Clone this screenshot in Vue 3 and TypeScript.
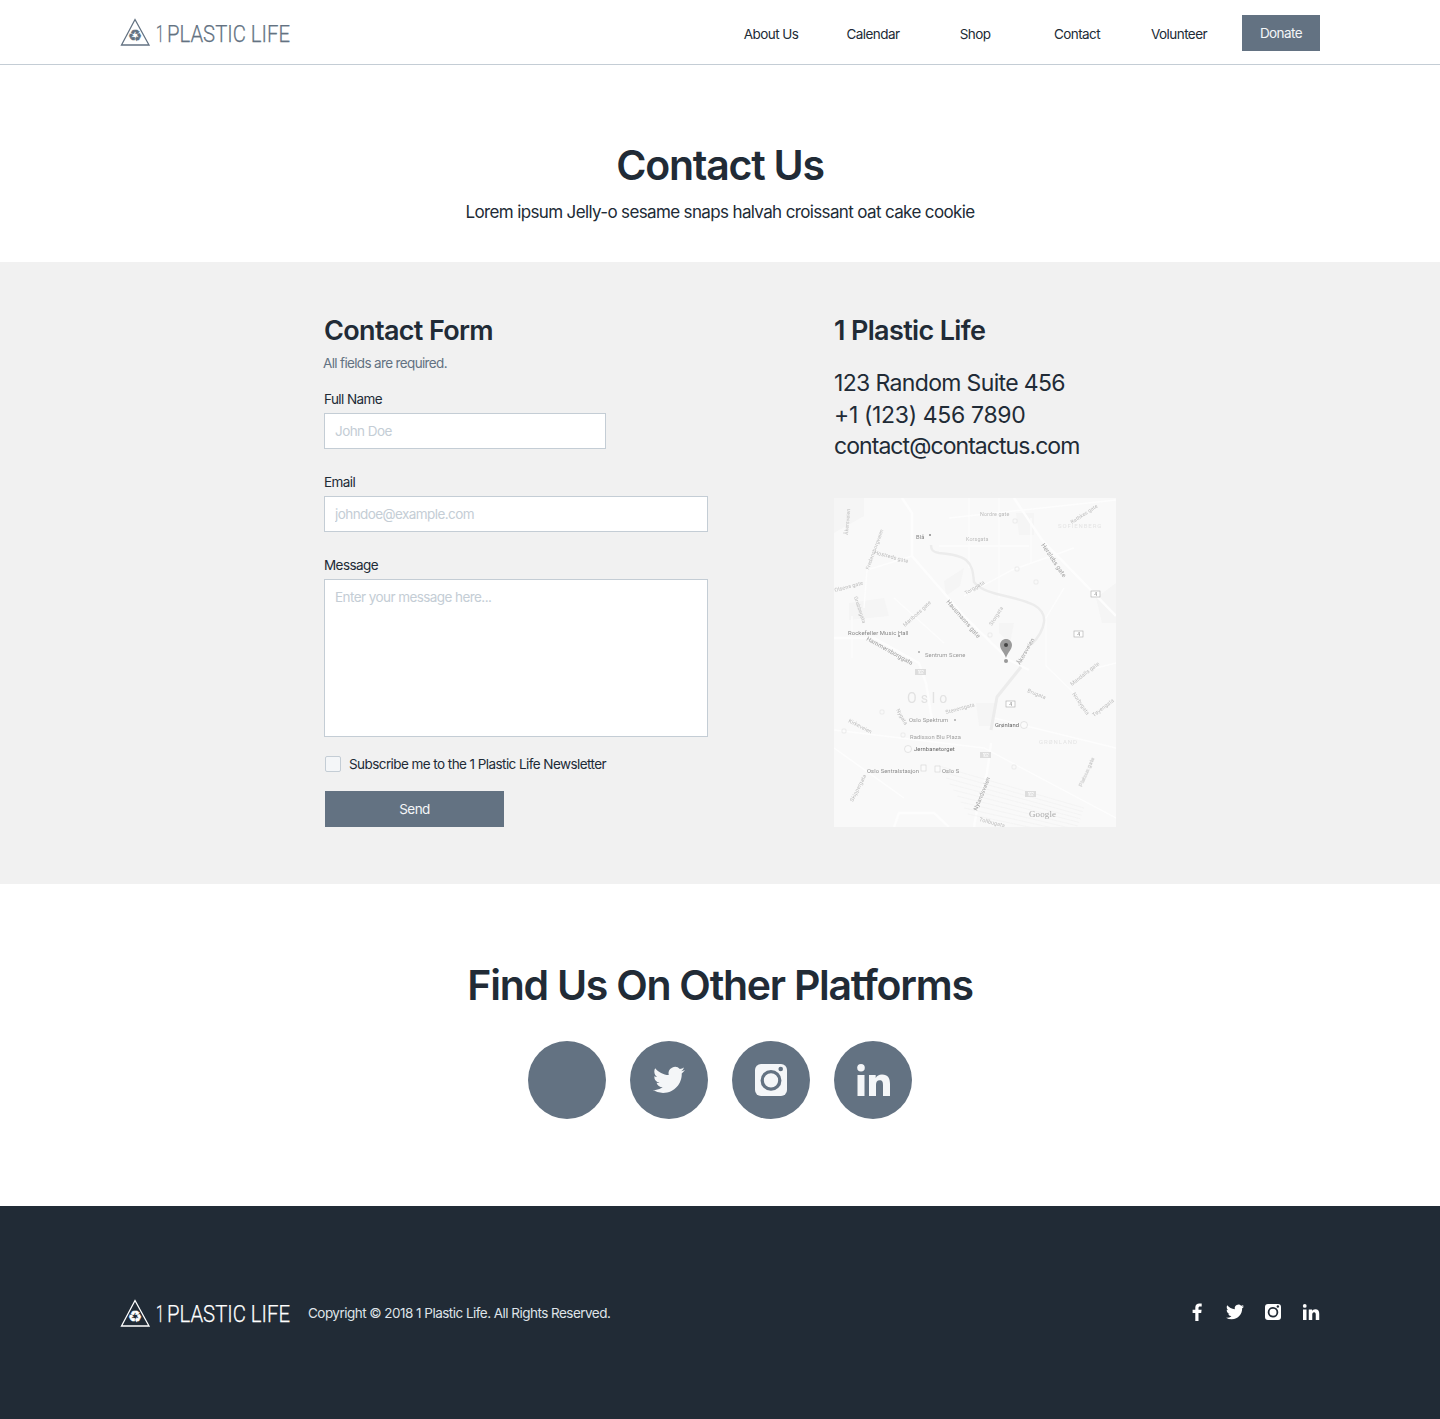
<script setup lang="ts">
const nav: string[] = ['About Us', 'Calendar', 'Shop', 'Contact', 'Volunteer']

interface Label { t: string; x: number; y: number; r?: number; c?: string; s?: number }
const labels: Label[] = [
  { t: 'Nordre gate', x: 146, y: 18, s: 5.4 },
  { t: 'Korsgata', x: 132, y: 43, s: 5.4 },
  { t: 'Blå', x: 82, y: 41, c: '#868686', s: 5.8 },
  { t: 'Rathkes gate', x: 238, y: 26, r: -33, s: 5.2 },
  { t: 'Hausmanns gate', x: 112, y: 104, r: 49, c: '#a0a0a0', s: 6.2 },
  { t: 'Herslebs gate', x: 207, y: 47, r: 56, c: '#a0a0a0', s: 6.2 },
  { t: 'Rockefeller Music Hall', x: 14, y: 137, c: '#868686', s: 5.9 },
  { t: 'Hammersborggata', x: 32, y: 142, r: 29, c: '#989898', s: 6 },
  { t: 'Sentrum Scene', x: 91, y: 159, c: '#989898', s: 5.8 },
  { t: 'Åkersveien', x: 186, y: 167, r: -60, c: '#a0a0a0', s: 5.8 },
  { t: 'Hostreds gate', x: 40, y: 56, r: 15, s: 5.4 },
  { t: 'Fredensborgveien', x: 35, y: 72, r: -70, s: 5.2 },
  { t: 'Torggata', x: 132, y: 97, r: -31, s: 5.4 },
  { t: 'Storgata', x: 158, y: 128, r: -58, s: 5.4 },
  { t: 'Olsens gate', x: 1, y: 94, r: -15, s: 5.4 },
  { t: 'Grubbegata', x: 20, y: 99, r: 72, s: 5.2 },
  { t: 'Mariboes gate', x: 71, y: 129, r: -42, s: 5.4 },
  { t: 'Åkersveien', x: 14, y: 37, r: -85, s: 5.2 },
  { t: 'Stenersgata', x: 112, y: 216, r: -15, s: 5.4 },
  { t: 'Brugata', x: 193, y: 194, r: 22, s: 5.4 },
  { t: 'Mandalls gate', x: 238, y: 188, r: -38, s: 5.4 },
  { t: 'Norbygata', x: 238, y: 196, r: 55, s: 5.4 },
  { t: 'Tøyengata', x: 260, y: 219, r: -38, s: 5.4 },
  { t: 'Kirkeveien', x: 14, y: 224, r: 27, s: 5.4 },
  { t: 'Nygata', x: 62, y: 212, r: 60, s: 5.4 },
  { t: 'Platous gate', x: 248, y: 289, r: -66, s: 5.4 },
  { t: 'Skippergata', x: 19, y: 304, r: -63, s: 5.4 },
  { t: 'Oslo Spektrum', x: 75, y: 224, c: '#989898', s: 5.8 },
  { t: 'Grønland', x: 161, y: 229, c: '#666', s: 5.8 },
  { t: 'Radisson Blu Plaza', x: 76, y: 241, c: '#a0a0a0', s: 5.8 },
  { t: 'Jernbanetorget', x: 80, y: 253, c: '#666', s: 5.8 },
  { t: 'Oslo Sentralstasjon', x: 33, y: 275, c: '#8c8c8c', s: 5.8 },
  { t: 'Oslo S', x: 108, y: 275, c: '#8c8c8c', s: 5.8 },
  { t: 'Nylandsveien', x: 143, y: 313, r: -68, c: '#a0a0a0', s: 5.8 },
  { t: 'Tollbugata', x: 145, y: 323, r: 14, s: 5.4 },
]
const shields: [number, number, number, string][] = [
  [257, 93, 9, '4'], [240, 133, 9, '4'], [172, 203, 9, '4'],
  [81, 171, 11, '162'], [146, 254, 11, '162'], [191, 293, 11, '162'],
]
const markers: [number, number][] = [[179, 21], [181, 69], [200, 82], [154, 135], [46, 212], [8, 231], [67, 235], [178, 267]]
const rails: number[] = [0, 6, 12, 18, 24, 30, 36, 42, 48]
</script>

<template>
  <div class="page">
    <header class="top">
      <svg class="logo" viewBox="0 0 172 30" width="172" height="30">
        <path class="tri" d="M15 2.500 29 28H1.500Z" />
        <text class="rec" x="15" y="24" text-anchor="middle">♻</text>
        <text class="word" x="36" y="24.500" textLength="8" lengthAdjust="spacingAndGlyphs">1</text>
        <text class="word" x="47" y="24.500" textLength="123" lengthAdjust="spacingAndGlyphs">PLASTIC LIFE</text>
      </svg>
      <nav class="nav">
        <a v-for="n in nav" :key="n" class="nav-item">{{ n }}</a>
        <a class="donate">Donate</a>
      </nav>
    </header>

    <section class="hero">
      <h1>Contact Us</h1>
      <p>Lorem ipsum Jelly-o sesame snaps halvah croissant oat cake cookie</p>
    </section>

    <section class="contact">
      <form class="form" @submit.prevent>
        <h2>Contact Form</h2>
        <p class="req">All fields are required.</p>
        <label class="field">
          <span>Full Name</span>
          <input class="name" placeholder="John Doe" />
        </label>
        <label class="field">
          <span>Email</span>
          <input placeholder="johndoe@example.com" />
        </label>
        <label class="field">
          <span>Message</span>
          <textarea placeholder="Enter your message here..."></textarea>
        </label>
        <label class="check">
          <input type="checkbox" />
          <span>Subscribe me to the 1 Plastic Life Newsletter</span>
        </label>
        <button class="send" type="submit">Send</button>
      </form>
      <div class="info">
        <h2>1 Plastic Life</h2>
        <address>
          <span class="l1">123 Random Suite 456</span>
          <span class="l2">+1 (123) 456 7890</span>
          <span class="l3">contact@contactus.com</span>
        </address>
        <svg class="map" viewBox="0 0 282 329" width="282" height="329">
          <rect width="282" height="329" fill="#f9f9f9" />
          <g class="blocks">
            <path d="M0 0H30V18L0 35Z" />
            <path d="M182 15H200V37H185Z" />
            <path d="M110 83 130 70 126 88 112 98Z" />
            <path d="M15 105 50 100 55 118 15 122Z" />
            <path d="M165 125H180L176 145 165 135Z" />
            <path d="M262 100 282 85V125L268 125Z" />
            <path d="M142 205H162L158 228H145Z" />
          </g>
          <g class="roads">
            <path class="wide" d="M68 0 78 15V58L130 118 175 162 195 172" />
            <path class="wide" d="M0 140H40L85 165 92 185 98 222" />
            <path d="M78 58 33 72 30 110" />
            <path d="M130 98 178 72 240 50" />
            <path class="wide" d="M180 0 208 42 282 118" />
            <path d="M135 0V70M165 0V100M197 20V65" />
            <path d="M115 20 282 2M105 48H195" />
            <path d="M160 220 282 250M0 232 150 250 282 320" />
            <path class="wide" d="M157 245 153 275 143 312 140 329" />
            <path d="M18 118V160M60 100 110 145" />
            <path class="wide" d="M60 329 65 315H100L115 329" />
            <path d="M230 90 212 120V168L240 195" />
            <path d="M0 250 70 300M262 170 282 165" />
          </g>
          <g class="rails">
            <path v-for="r in rails" :key="r" :d="`M${105 + r * 0.6} ${268 + r} L${250 - r * 0.2} ${310 + r * 0.6}`" />
          </g>
          <path class="river" d="M97 47C97 52 99 54 105 55 115 56 125 57 132 62 138 67 139 73 140 84 146 92 158 95 167 97 180 100 192 103 200 107 207 111 211 116 210 124 209 132 204 140 197 147" />
          <path class="rail-main" d="M187 169 163 199 157 232" />
          <g class="labels">
            <text v-for="l in labels" :key="l.t + l.x" :x="l.x" :y="l.y" :fill="l.c || '#bdbdbd'" :font-size="l.s || 5" :transform="l.r ? `rotate(${l.r} ${l.x} ${l.y})` : undefined">{{ l.t }}</text>
            <text class="area" x="224" y="30">SOFIENBERG</text>
            <text class="area" x="205" y="246">GRØNLAND</text>
            <text class="city" x="73" y="205">Oslo</text>
            <text class="goog" x="195" y="319" fill="#aaa" font-size="9">Google</text>
          </g>
          <g v-for="(s, i) in shields" :key="i">
            <rect :x="s[0]" :y="s[1]" :width="s[2]" height="6" :fill="s[3] === '4' ? '#fff' : '#ddd'" :stroke="s[3] === '4' ? '#aaa' : 'none'" stroke-width="0.6" />
            <text :x="s[0] + s[2] / 2" :y="s[1] + 5" text-anchor="middle" font-size="4.5" :fill="s[3] === '4' ? '#777' : '#fff'">{{ s[3] }}</text>
          </g>
          <rect v-for="(m, i) in markers" :key="'m' + i" :x="m[0]" :y="m[1]" width="4" height="4" rx="1" class="marker" />
          <circle cx="96" cy="37" r="1" fill="#888" />
          <circle cx="65" cy="138" r="1" fill="#999" />
          <circle cx="85" cy="154" r="1" fill="#aaa" />
          <circle cx="121" cy="222" r="1" fill="#aaa" />
          <circle class="tcirc" cx="190" cy="227" r="3.5" />
          <circle class="tcirc" cx="74" cy="251" r="3.5" />
          <rect class="tcirc" x="87" y="267" width="5" height="6" />
          <rect class="tcirc" x="101" y="268" width="5" height="6" />
          <path d="M172 141c-3.300 0-6 2.700-6 6 0 4.300 4.600 8 6 13 1.400-5 6-8.700 6-13 0-3.300-2.700-6-6-6Z" fill="#9b9b9b" />
          <circle cx="172" cy="147" r="2" fill="#444" />
          <circle cx="172" cy="163" r="2" fill="#999" />
        </svg>
      </div>
    </section>

    <section class="platforms">
      <h1>Find Us On Other Platforms</h1>
      <div class="circles">
        <a class="circle"></a>
        <a class="circle">
          <svg viewBox="0 0 24 24" width="32" height="32"><path class="ic" d="M23.953 4.570a10 10 0 0 1-2.825.775 4.958 4.958 0 0 0 2.163-2.723c-.951.555-2.005.959-3.127 1.184a4.920 4.920 0 0 0-8.384 4.482C7.690 8.095 4.067 6.130 1.640 3.162a4.822 4.822 0 0 0-.666 2.475c0 1.710.870 3.213 2.188 4.096a4.904 4.904 0 0 1-2.228-.616v.060a4.923 4.923 0 0 0 3.946 4.827 4.996 4.996 0 0 1-2.212.085 4.936 4.936 0 0 0 4.604 3.417 9.867 9.867 0 0 1-6.102 2.105c-.390 0-.779-.023-1.170-.067a13.995 13.995 0 0 0 7.557 2.209c9.053 0 13.998-7.496 13.998-13.985 0-.210 0-.420-.015-.630A9.935 9.935 0 0 0 24 4.590z" /></svg>
        </a>
        <a class="circle">
          <svg viewBox="0 0 32 32" width="32" height="32">
            <rect class="ic" width="32" height="32" rx="6" />
            <circle cx="16" cy="16.400" r="8.800" fill="none" stroke="#637282" stroke-width="3.300" />
            <circle cx="25.700" cy="5" r="2.300" fill="#637282" />
          </svg>
        </a>
        <a class="circle">
          <svg viewBox="0 0 33 32" width="33" height="32">
            <circle class="ic" cx="4" cy="3.800" r="3.800" />
            <rect class="ic" x="0.500" y="11" width="7" height="21" />
            <path class="ic" d="M12 11h6.700v2.900c1.100-1.900 3.300-3.400 6.300-3.400 6 0 8 3.800 8 9.500V32h-7V21c0-2.700-.6-4.700-3.300-4.700S19 18.300 19 21v11h-7Z" />
          </svg>
        </a>
      </div>
    </section>

    <footer class="foot">
      <div class="foot-left">
        <svg class="logo dark" viewBox="0 0 172 30" width="172" height="30">
          <path class="tri" d="M15 2.500 29 28H1.500Z" />
          <text class="rec" x="15" y="24" text-anchor="middle">♻</text>
          <text class="word" x="36" y="24" textLength="8" lengthAdjust="spacingAndGlyphs">1</text>
          <text class="word" x="47" y="24" textLength="123" lengthAdjust="spacingAndGlyphs">PLASTIC LIFE</text>
        </svg>
        <span class="copy">Copyright © 2018 1 Plastic Life. All Rights Reserved.</span>
      </div>
      <div class="foot-icons">
        <svg viewBox="-4 0 18 18" width="18" height="18"><path fill="#fff" d="M6.500 18V10h2.700l.4-3.200H6.500V4.900c0-.9.300-1.500 1.600-1.500H9.700V.6C9.400.6 8.500.5 7.400.5 5 .5 3.300 2 3.300 4.600v2.200H.6V10h2.700v8Z" /></svg>
        <svg viewBox="0 0 24 24" width="18" height="18"><path fill="#fff" d="M23.953 4.570a10 10 0 0 1-2.825.775 4.958 4.958 0 0 0 2.163-2.723c-.951.555-2.005.959-3.127 1.184a4.920 4.920 0 0 0-8.384 4.482C7.690 8.095 4.067 6.130 1.640 3.162a4.822 4.822 0 0 0-.666 2.475c0 1.710.870 3.213 2.188 4.096a4.904 4.904 0 0 1-2.228-.616v.060a4.923 4.923 0 0 0 3.946 4.827 4.996 4.996 0 0 1-2.212.085 4.936 4.936 0 0 0 4.604 3.417 9.867 9.867 0 0 1-6.102 2.105c-.390 0-.779-.023-1.170-.067a13.995 13.995 0 0 0 7.557 2.209c9.053 0 13.998-7.496 13.998-13.985 0-.210 0-.420-.015-.630A9.935 9.935 0 0 0 24 4.590z" /></svg>
        <svg viewBox="-2 -2 36 36" width="18" height="18">
          <rect fill="#fff" width="32" height="32" rx="6" />
          <circle cx="16" cy="16.400" r="8.800" fill="none" stroke="#212b36" stroke-width="3.600" />
          <circle cx="25.700" cy="5" r="2.400" fill="#212b36" />
        </svg>
        <svg viewBox="-1.500 -2 36 36" width="18" height="18">
          <circle fill="#fff" cx="4" cy="3.800" r="3.800" />
          <rect fill="#fff" x="0.500" y="11" width="7" height="21" />
          <path fill="#fff" d="M12 11h6.700v2.900c1.100-1.900 3.300-3.400 6.300-3.400 6 0 8 3.800 8 9.500V32h-7V21c0-2.700-.6-4.700-3.300-4.700S19 18.300 19 21v11h-7Z" />
        </svg>
      </div>
    </footer>
  </div>
</template>

<style>
html, body { margin: 0; background: #fff; }
</style>

<style scoped>
.page {
  font-family: Inter, "Liberation Sans", sans-serif;
  color: #212b36;
  width: 1440px;
  font-size: 13.500px;
  letter-spacing: -0.570px;
}
.top {
  height: 64px;
  border-bottom: 1px solid #c4cdd5;
  padding: 0 120px;
  display: flex;
  align-items: center;
  justify-content: space-between;
}
.logo { display: block; flex: none; overflow: visible; }
.tri { fill: none; stroke: #637282; stroke-width: 1.300; }
.rec { font-family: "DejaVu Sans", sans-serif; font-size: 16px; fill: #637282; stroke: #637282; stroke-width: 0.350; letter-spacing: 0; }
.word { font-family: Roboto, sans-serif; font-weight: 300; font-size: 24px; fill: #637282; stroke: #637282; stroke-width: 0.250; letter-spacing: 0; }
.dark .tri { stroke: #fff; }
.dark .rec { fill: #fff; stroke: #fff; }
.dark .word { fill: #fff; stroke: #fff; }
.nav { display: flex; align-items: center; margin-top: 2px; }
.nav-item { width: 102px; text-align: center; line-height: 36px; margin-top: 2px; }
.donate {
  width: 78px;
  height: 36px;
  margin-left: 12px;
  background: #637282;
  color: #f4f6f8;
  text-align: center;
  line-height: 36px;
}
.hero { height: 197px; padding-top: 74px; box-sizing: border-box; text-align: center; }
h1 {
  margin: 0;
  font-size: 41px;
  line-height: 52px;
  font-weight: 600;
  letter-spacing: -1.250px;
}
.hero p { margin: 8px 0 0; font-size: 17px; line-height: 26px; letter-spacing: -0.640px; }
.contact {
  background: #f1f1f1;
  height: 622px;
  box-sizing: border-box;
  padding: 51px 0 0 324px;
  display: flex;
  gap: 126px;
}
.form { width: 384px; display: flex; flex-direction: column; align-items: flex-start; }
h2 { margin: 0; font-size: 27px; line-height: 36px; font-weight: 600; letter-spacing: -0.650px; }
.req { margin: 3px 0 0 -1px; color: #637282; line-height: 22px; letter-spacing: -0.650px; }
.field { display: block; width: 100%; margin-top: 15px; }
.field + .field { margin-top: 23px; }
.field > span { display: block; line-height: 20px; margin-bottom: 4px; }
input, textarea {
  display: block;
  width: 100%;
  box-sizing: border-box;
  height: 36px;
  border: 1px solid #c4cdd5;
  background: #fff;
  padding: 0 10px;
  font: inherit;
  letter-spacing: inherit;
  color: #212b36;
  border-radius: 0;
  outline: none;
  margin: 0;
}
input.name { width: 282px; }
textarea { height: 158px; padding: 9px 10px; resize: none; }
input::placeholder, textarea::placeholder { color: #c4cdd5; opacity: 1; }
.check { display: flex; align-items: center; gap: 8px; margin: 18px 0 0 1px; line-height: 18px; }
.check input {
  appearance: none;
  width: 16px;
  height: 16px;
  padding: 0;
  border: 1px solid #c4cdd5;
  border-radius: 2px;
  background: #f4f6f8;
}
.send {
  margin: 18px 0 0 1px;
  width: 179px;
  height: 36px;
  border: 0;
  background: #637282;
  color: #f4f6f8;
  font: inherit;
  letter-spacing: inherit;
  padding: 0;
}
.info { width: 282px; }
address {
  font-style: normal;
  font-size: 23px;
  line-height: 31.500px;
  margin-top: 19px;
  white-space: nowrap;
}
address span { display: block; }
.l1 { letter-spacing: -0.650px; }
.l2 { letter-spacing: -0.340px; }
.l3 { letter-spacing: -0.940px; }
.map { display: block; margin-top: 35px; }
.blocks { fill: #f5f5f5; }
.roads { fill: none; stroke: #fdfdfd; stroke-width: 1.400; }
.roads .wide { stroke-width: 2.400; }
.rails { fill: none; stroke: #f2f2f2; stroke-width: 0.800; }
.river { fill: none; stroke: #ececec; stroke-width: 2.400; }
.rail-main { fill: none; stroke: #ececec; stroke-width: 3; }
.labels { filter: blur(0.250px); }
.labels text { font-family: Roboto, sans-serif; letter-spacing: 0.100px; }
.labels .area { font-size: 6px; letter-spacing: 0.900px; fill: #e4e4e4; }
.labels .city { font-size: 14px; letter-spacing: 4px; fill: #e2e2e2; }
.labels .goog { font-family: "Liberation Serif", serif; }
.marker { fill: none; stroke: #e0e0e0; stroke-width: 0.600; }
.tcirc { fill: #fbfbfb; stroke: #ccc; stroke-width: 0.500; }
.platforms { height: 322px; box-sizing: border-box; padding-top: 75px; text-align: center; }
.circles { display: flex; justify-content: center; gap: 24px; margin-top: 30px; }
.circle {
  width: 78px;
  height: 78px;
  border-radius: 50%;
  background: #637282;
  display: flex;
  align-items: center;
  justify-content: center;
}
.ic { fill: #f4f6f8; }
.foot {
  background: #212b36;
  height: 213px;
  box-sizing: border-box;
  padding: 0 120px;
  display: flex;
  align-items: center;
  justify-content: space-between;
}
.foot-left { display: flex; align-items: center; gap: 16px; }
.copy { color: #dfe3e8; letter-spacing: -0.530px; }
.foot-icons { display: flex; align-items: center; gap: 20px; margin-top: -2px; }
</style>
